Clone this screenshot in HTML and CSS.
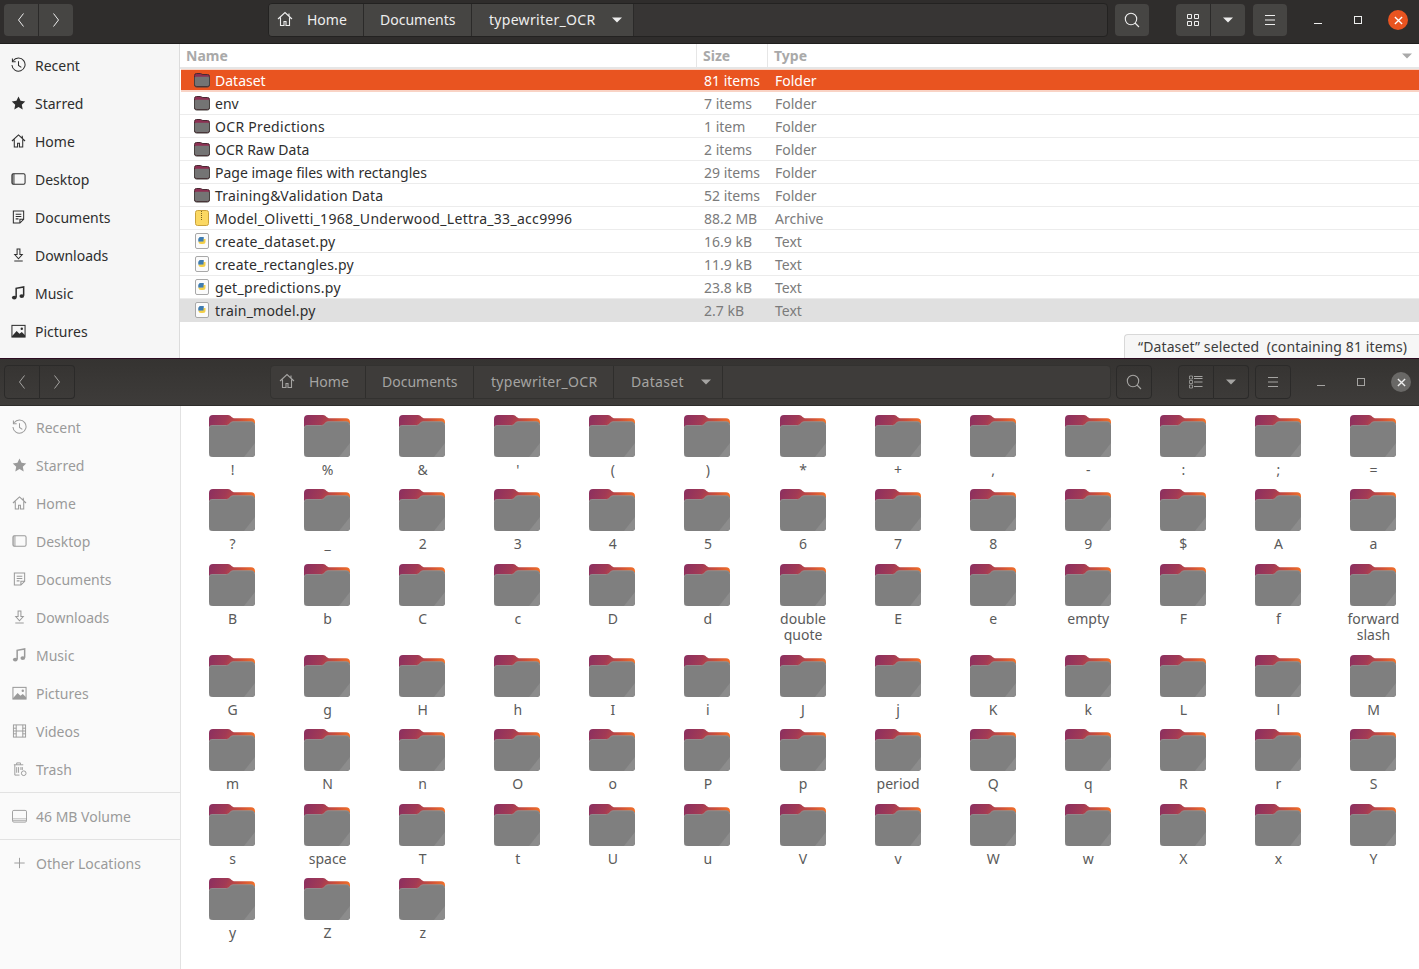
FILE: index.html
```html
<!DOCTYPE html>
<html lang="en">
<head>
<meta charset="utf-8">
<title>Files</title>
<link rel="stylesheet" href="styles.css">
</head>
<body>
<svg class="defs" aria-hidden="true">
  <defs>
    <linearGradient id="tabgrad" x1="0" y1="0" x2="1" y2="0.2">
      <stop offset="0" stop-color="#8a2f60"/><stop offset="0.4" stop-color="#a23a55"/><stop offset="0.72" stop-color="#cf5038"/><stop offset="1" stop-color="#f0702a"/>
    </linearGradient>
    <symbol id="folder" viewBox="0 0 46 42">
      <path d="M0 4a4 4 0 0 1 4-4h15c3 0 3.500 3.300 7 3.300h16a4 4 0 0 1 4 4V20H0z" fill="url(#tabgrad)"/>
      <path d="M0 13c0-1.500 1-2.500 2.500-2.500h15c3 0 3.500-3.800 6.500-3.800h18.500c2 0 3.500 1.500 3.500 3.500v27.800a4 4 0 0 1-4 4H4a4 4 0 0 1-4-4z" fill="#7f7f7f"/>
      <path d="M.3 13c0-1.500 1-2.500 2.500-2.500h14.700c3 0 3.500-3.800 6.500-3.800h18c2 0 3.500 1.500 3.500 3.500" fill="none" stroke="#949494" stroke-width=".8"/>
      <path d="M46 28v10a4 4 0 0 1-4 4h-7z" fill="#8c8c8c"/>
      <path d="M0 39a4 4 0 0 0 4 3h38a4 4 0 0 0 4-3v1a3 3 0 0 1-3 2H3a3 3 0 0 1-3-2z" fill="#6e6e6e"/>
    </symbol>
    <symbol id="sfolder" viewBox="0 0 16 15">
      <path d="M.5 3a2 2 0 0 1 2-2h4c1 0 1 1 2.500 1h4.500a2 2 0 0 1 2 2v8a2 2 0 0 1-2 2h-11a2 2 0 0 1-2-2z" fill="#8c2f52" stroke="#4a2a33"/>
      <path d="M1 5.500c0-.8.400-1.200 1.200-1.200h11.600c.8 0 1.200.4 1.200 1.200V12a1.500 1.500 0 0 1-1.500 1.500h-11A1.500 1.500 0 0 1 1 12z" fill="#747474"/>
      <path d="M2.500 14.500h11a2 2 0 0 0 2-2V4.500M.5 4.500v8a2 2 0 0 0 2 2" fill="none" stroke="#46413f"/>
    </symbol>
    <symbol id="pyfile" viewBox="0 0 14 16">
      <rect x=".5" y=".5" width="13" height="15" rx="1.500" fill="#fbfbfb" stroke="#a8a8a8"/>
      <path d="M3.500 8.500V6.500A2.500 2.500 0 0 1 6 4h2.500v2H6.800v2.500z" fill="#3f7cb0"/>
      <path d="M3.500 8.500h3.300V6h3.700v2.500a2.500 2.500 0 0 1-2.500 2.500H6a2.500 2.500 0 0 1-2.500-2.500z" fill="#f3cf4a"/>
      <path d="M3.500 8.500V6.500A2.500 2.500 0 0 1 6 4h2.500v4.500z" fill="#3f7cb0"/>
    </symbol>
    <symbol id="zipfile" viewBox="0 0 14 16">
      <rect x=".5" y=".5" width="13" height="15" rx="2" fill="#fbd862" stroke="#c9a23c"/>
      <path d="M6 1.500h2M6 3.500h2M6 5.500h2M6 7.500h2M6 9.500h2" stroke="#7a6420" stroke-width="1" stroke-dasharray="1 1"/>
    </symbol>
    <symbol id="i-home" viewBox="0 0 16 16"><path d="M1 8 8 1.500 15 8M3.500 6.500V14.500h3.500v-4h2v4h3.500V6.500M12 2.500v2.500" fill="none" stroke="currentColor" stroke-width="1.100"/></symbol>
    <symbol id="i-recent" viewBox="0 0 16 16"><path d="M2.300 3.500A7 7 0 1 1 1 8M1.500 1v3.500H5M8 4v4.500l3 2" fill="none" stroke="currentColor" stroke-width="1.100"/></symbol>
    <symbol id="i-star" viewBox="0 0 16 16"><path d="m8 1 2.200 4.700 5 .6-3.700 3.500 1 5L8 12.300 3.500 14.800l1-5L.8 6.300l5-.6z" fill="currentColor"/></symbol>
    <symbol id="i-desktop" viewBox="0 0 16 16"><rect x="1" y="2.500" width="14" height="11" rx="1.500" fill="none" stroke="currentColor" stroke-width="1.100"/><rect x="1" y="2.500" width="3" height="11" fill="currentColor" opacity=".55"/></symbol>
    <symbol id="i-docs" viewBox="0 0 16 16"><path d="M2.500 1.500h11v9l-4 4h-7zM13.500 10.500h-4v4M5 5h6M5 7.500h6M5 10h3" fill="none" stroke="currentColor" stroke-width="1.100"/></symbol>
    <symbol id="i-down" viewBox="0 0 16 16"><path d="M6.500 1.500h3v6h2.500L8 12 4 7.500h2.500zM3.500 14.500h9" fill="none" stroke="currentColor" stroke-width="1.100"/></symbol>
    <symbol id="i-music" viewBox="0 0 16 16"><path d="M5.500 12.500V3l8-1.500V11" fill="none" stroke="currentColor" stroke-width="1.600"/><ellipse cx="3.500" cy="12.800" rx="2.500" ry="2" fill="currentColor"/><ellipse cx="11.500" cy="11.300" rx="2.500" ry="2" fill="currentColor"/></symbol>
    <symbol id="i-pics" viewBox="0 0 16 16"><rect x="1" y="2" width="14" height="12.500" fill="none" stroke="currentColor" stroke-width="1.100"/><path d="M1 13.500 6 8l3 3 2.500-2 3.500 3.500v2H1z" fill="currentColor"/><circle cx="11.500" cy="5.500" r="1.300" fill="currentColor"/></symbol>
    <symbol id="i-video" viewBox="0 0 16 16"><rect x="1.500" y="1.500" width="13" height="13" fill="none" stroke="currentColor"/><path d="M4.500 1.500v13M11.500 1.500v13M4.500 8h7M1.500 5h3M1.500 8h3M1.500 11h3M11.500 5h3M11.500 8h3M11.500 11h3" stroke="currentColor"/></symbol>
    <symbol id="i-trash" viewBox="0 0 16 16"><path d="M2 3.500h10M5 3.500V1.500h4v2M3 3.500v11h5M5 6v6M7 6v6M9.500 6v3M11 6v3" fill="none" stroke="currentColor"/><circle cx="12.500" cy="12.500" r="2.500" fill="none" stroke="currentColor"/></symbol>
    <symbol id="i-drive" viewBox="0 0 16 16"><rect x=".5" y="2" width="15" height="12.500" rx="1.500" fill="none" stroke="currentColor"/><path d="M.5 11h15M.5 12.800h15" stroke="currentColor" stroke-width=".7"/></symbol>
    <symbol id="i-plus" viewBox="0 0 16 16"><path d="M8 2.500v11M2.500 8h11" stroke="currentColor"/></symbol>
    <symbol id="i-search" viewBox="0 0 16 16"><circle cx="7" cy="7" r="5.700" fill="none" stroke="currentColor" stroke-width="1.100"/><path d="m11 11 4 4" stroke="currentColor" stroke-width="1.100"/></symbol>
    <symbol id="i-grid" viewBox="0 0 14 14"><path d="M1.500 1.500h4v4h-4zM8.500 1.500h4v4h-4zM1.500 8.500h4v4h-4zM8.500 8.500h4v4h-4z" fill="none" stroke="currentColor"/></symbol>
    <symbol id="i-list" viewBox="0 0 14 14"><path d="M.5 1h3v3h-3zM.5 5.500h3v3h-3zM.5 10h3v3h-3z" fill="none" stroke="currentColor" stroke-width=".8"/><path d="M5 1.500h8.500M5 3.500h8.500M5 7h8.500M5 11.500h8.500" stroke="currentColor"/></symbol>
    <symbol id="i-menu" viewBox="0 0 12 12"><path d="M1 1.500h10M1 6h10M1 10.500h10" stroke="currentColor"/></symbol>
    <symbol id="i-left" viewBox="0 0 8 16"><path d="M6.500 1.500 1.500 8l5 6.500" fill="none" stroke="currentColor"/></symbol>
    <symbol id="i-right" viewBox="0 0 8 16"><path d="M1.500 1.500 6.500 8l-5 6.500" fill="none" stroke="currentColor"/></symbol>
    <symbol id="i-caret" viewBox="0 0 10 6"><path d="M0 .5h10L5 5.500z" fill="currentColor"/></symbol>
    <symbol id="i-x" viewBox="0 0 10 10"><path d="m1 1 8 8M9 1 1 9" stroke="currentColor" stroke-width="1.500"/></symbol>
  </defs>
</svg>

<div class="win win-top">
  <header class="bar">
    <div class="grp nav">
      <button class="btn b-nav"><svg class="ic-nav"><use href="#i-left"/></svg></button>
      <button class="btn b-nav"><svg class="ic-nav"><use href="#i-right"/></svg></button>
    </div>
    <div class="path">
      <div class="crumb c-home"><svg class="ic-home"><use href="#i-home"/></svg><span>Home</span></div>
      <div class="crumb c-doc"><span>Documents</span></div>
      <div class="crumb c-ocr"><span class="wide">typewriter_OCR</span><svg class="ic-caret"><use href="#i-caret"/></svg></div>
    </div>
    <button class="btn b-search"><svg class="ic-search"><use href="#i-search"/></svg></button>
    <div class="grp view">
      <button class="btn b-view"><svg class="ic-view"><use href="#i-grid"/></svg></button>
      <button class="btn b-view"><svg class="ic-caret"><use href="#i-caret"/></svg></button>
    </div>
    <button class="btn b-menu"><svg class="ic-menu"><use href="#i-menu"/></svg></button>
    <div class="wc">
      <span class="wc-min"></span>
      <span class="wc-max"></span>
      <span class="wc-close"><svg class="ic-x"><use href="#i-x"/></svg></span>
    </div>
  </header>
  <div class="body">
    <nav class="side">
      <a class="si"><svg class="si-ic"><use href="#i-recent"/></svg>Recent</a>
      <a class="si"><svg class="si-ic"><use href="#i-star"/></svg>Starred</a>
      <a class="si"><svg class="si-ic"><use href="#i-home"/></svg>Home</a>
      <a class="si"><svg class="si-ic"><use href="#i-desktop"/></svg>Desktop</a>
      <a class="si"><svg class="si-ic"><use href="#i-docs"/></svg>Documents</a>
      <a class="si"><svg class="si-ic"><use href="#i-down"/></svg>Downloads</a>
      <a class="si"><svg class="si-ic"><use href="#i-music"/></svg>Music</a>
      <a class="si"><svg class="si-ic"><use href="#i-pics"/></svg>Pictures</a>
    </nav>
    <main class="list">
      <div class="lh">
        <div class="col-name">Name</div><div class="col-size">Size</div><div class="col-type">Type<svg class="ic-sort"><use href="#i-caret"/></svg></div>
      </div>
      <div class="row sel"><div class="c1"><svg class="ric"><use href="#sfolder"/></svg>Dataset</div><div class="c2">81 items</div><div class="c3">Folder</div></div>
      <div class="row"><div class="c1"><svg class="ric"><use href="#sfolder"/></svg>env</div><div class="c2">7 items</div><div class="c3">Folder</div></div>
      <div class="row"><div class="c1"><svg class="ric"><use href="#sfolder"/></svg><span class="wide">OCR Predictions</span></div><div class="c2">1 item</div><div class="c3">Folder</div></div>
      <div class="row"><div class="c1"><svg class="ric"><use href="#sfolder"/></svg>OCR Raw Data</div><div class="c2">2 items</div><div class="c3">Folder</div></div>
      <div class="row"><div class="c1"><svg class="ric"><use href="#sfolder"/></svg>Page image files with rectangles</div><div class="c2">29 items</div><div class="c3">Folder</div></div>
      <div class="row"><div class="c1"><svg class="ric"><use href="#sfolder"/></svg><span class="mid">Training&amp;Validation Data</span></div><div class="c2">52 items</div><div class="c3">Folder</div></div>
      <div class="row"><div class="c1"><svg class="ric"><use href="#zipfile"/></svg><span class="wide">Model_Olivetti_1968_Underwood_Lettra_33_acc9996</span></div><div class="c2">88.2 MB</div><div class="c3">Archive</div></div>
      <div class="row"><div class="c1"><svg class="ric"><use href="#pyfile"/></svg><span class="wide">create_dataset.py</span></div><div class="c2">16.9 kB</div><div class="c3">Text</div></div>
      <div class="row"><div class="c1"><svg class="ric"><use href="#pyfile"/></svg><span class="mid">create_rectangles.py</span></div><div class="c2">11.9 kB</div><div class="c3">Text</div></div>
      <div class="row"><div class="c1"><svg class="ric"><use href="#pyfile"/></svg><span class="wide">get_predictions.py</span></div><div class="c2">23.8 kB</div><div class="c3">Text</div></div>
      <div class="row hov"><div class="c1"><svg class="ric"><use href="#pyfile"/></svg><span class="mid">train_model.py</span></div><div class="c2">2.7 kB</div><div class="c3">Text</div></div>
      <div class="status">“Dataset” selected  (containing 81 items)</div>
    </main>
  </div>
</div>

<div class="win win-bot">
  <header class="bar">
    <div class="grp nav">
      <button class="btn b-nav"><svg class="ic-nav"><use href="#i-left"/></svg></button>
      <button class="btn b-nav"><svg class="ic-nav"><use href="#i-right"/></svg></button>
    </div>
    <div class="path">
      <div class="crumb c-home"><svg class="ic-home"><use href="#i-home"/></svg><span>Home</span></div>
      <div class="crumb c-doc"><span>Documents</span></div>
      <div class="crumb c-ocr2"><span class="wide">typewriter_OCR</span></div>
      <div class="crumb c-data"><span class="wide">Dataset</span><svg class="ic-caret"><use href="#i-caret"/></svg></div>
    </div>
    <button class="btn b-search"><svg class="ic-search"><use href="#i-search"/></svg></button>
    <div class="grp view">
      <button class="btn b-view"><svg class="ic-view"><use href="#i-list"/></svg></button>
      <button class="btn b-view"><svg class="ic-caret"><use href="#i-caret"/></svg></button>
    </div>
    <button class="btn b-menu"><svg class="ic-menu"><use href="#i-menu"/></svg></button>
    <div class="wc">
      <span class="wc-min"></span>
      <span class="wc-max"></span>
      <span class="wc-close"><svg class="ic-x"><use href="#i-x"/></svg></span>
    </div>
  </header>
  <div class="body">
    <nav class="side">
      <a class="si"><svg class="si-ic"><use href="#i-recent"/></svg>Recent</a>
      <a class="si"><svg class="si-ic"><use href="#i-star"/></svg>Starred</a>
      <a class="si"><svg class="si-ic"><use href="#i-home"/></svg>Home</a>
      <a class="si"><svg class="si-ic"><use href="#i-desktop"/></svg>Desktop</a>
      <a class="si"><svg class="si-ic"><use href="#i-docs"/></svg>Documents</a>
      <a class="si"><svg class="si-ic"><use href="#i-down"/></svg>Downloads</a>
      <a class="si"><svg class="si-ic"><use href="#i-music"/></svg>Music</a>
      <a class="si"><svg class="si-ic"><use href="#i-pics"/></svg>Pictures</a>
      <a class="si"><svg class="si-ic"><use href="#i-video"/></svg>Videos</a>
      <a class="si"><svg class="si-ic"><use href="#i-trash"/></svg>Trash</a>
      <div class="sep"></div>
      <a class="si"><svg class="si-ic"><use href="#i-drive"/></svg>46 MB Volume</a>
      <div class="sep"></div>
      <a class="si"><svg class="si-ic"><use href="#i-plus"/></svg>Other Locations</a>
    </nav>
    <main class="icons">
      <div class="cell"><svg class="fo"><use href="#folder"/></svg><span>!</span></div>
      <div class="cell"><svg class="fo"><use href="#folder"/></svg><span>%</span></div>
      <div class="cell"><svg class="fo"><use href="#folder"/></svg><span>&amp;</span></div>
      <div class="cell"><svg class="fo"><use href="#folder"/></svg><span>'</span></div>
      <div class="cell"><svg class="fo"><use href="#folder"/></svg><span>(</span></div>
      <div class="cell"><svg class="fo"><use href="#folder"/></svg><span>)</span></div>
      <div class="cell"><svg class="fo"><use href="#folder"/></svg><span>*</span></div>
      <div class="cell"><svg class="fo"><use href="#folder"/></svg><span>+</span></div>
      <div class="cell"><svg class="fo"><use href="#folder"/></svg><span>,</span></div>
      <div class="cell"><svg class="fo"><use href="#folder"/></svg><span>-</span></div>
      <div class="cell"><svg class="fo"><use href="#folder"/></svg><span>:</span></div>
      <div class="cell"><svg class="fo"><use href="#folder"/></svg><span>;</span></div>
      <div class="cell"><svg class="fo"><use href="#folder"/></svg><span>=</span></div>
      <div class="cell"><svg class="fo"><use href="#folder"/></svg><span>?</span></div>
      <div class="cell"><svg class="fo"><use href="#folder"/></svg><span>_</span></div>
      <div class="cell"><svg class="fo"><use href="#folder"/></svg><span>2</span></div>
      <div class="cell"><svg class="fo"><use href="#folder"/></svg><span>3</span></div>
      <div class="cell"><svg class="fo"><use href="#folder"/></svg><span>4</span></div>
      <div class="cell"><svg class="fo"><use href="#folder"/></svg><span>5</span></div>
      <div class="cell"><svg class="fo"><use href="#folder"/></svg><span>6</span></div>
      <div class="cell"><svg class="fo"><use href="#folder"/></svg><span>7</span></div>
      <div class="cell"><svg class="fo"><use href="#folder"/></svg><span>8</span></div>
      <div class="cell"><svg class="fo"><use href="#folder"/></svg><span>9</span></div>
      <div class="cell"><svg class="fo"><use href="#folder"/></svg><span>$</span></div>
      <div class="cell"><svg class="fo"><use href="#folder"/></svg><span>A</span></div>
      <div class="cell"><svg class="fo"><use href="#folder"/></svg><span>a</span></div>
      <div class="cell"><svg class="fo"><use href="#folder"/></svg><span>B</span></div>
      <div class="cell"><svg class="fo"><use href="#folder"/></svg><span>b</span></div>
      <div class="cell"><svg class="fo"><use href="#folder"/></svg><span>C</span></div>
      <div class="cell"><svg class="fo"><use href="#folder"/></svg><span>c</span></div>
      <div class="cell"><svg class="fo"><use href="#folder"/></svg><span>D</span></div>
      <div class="cell"><svg class="fo"><use href="#folder"/></svg><span>d</span></div>
      <div class="cell"><svg class="fo"><use href="#folder"/></svg><span>double quote</span></div>
      <div class="cell"><svg class="fo"><use href="#folder"/></svg><span>E</span></div>
      <div class="cell"><svg class="fo"><use href="#folder"/></svg><span>e</span></div>
      <div class="cell"><svg class="fo"><use href="#folder"/></svg><span>empty</span></div>
      <div class="cell"><svg class="fo"><use href="#folder"/></svg><span>F</span></div>
      <div class="cell"><svg class="fo"><use href="#folder"/></svg><span>f</span></div>
      <div class="cell"><svg class="fo"><use href="#folder"/></svg><span>forward slash</span></div>
      <div class="cell"><svg class="fo"><use href="#folder"/></svg><span>G</span></div>
      <div class="cell"><svg class="fo"><use href="#folder"/></svg><span>g</span></div>
      <div class="cell"><svg class="fo"><use href="#folder"/></svg><span>H</span></div>
      <div class="cell"><svg class="fo"><use href="#folder"/></svg><span>h</span></div>
      <div class="cell"><svg class="fo"><use href="#folder"/></svg><span>I</span></div>
      <div class="cell"><svg class="fo"><use href="#folder"/></svg><span>i</span></div>
      <div class="cell"><svg class="fo"><use href="#folder"/></svg><span>J</span></div>
      <div class="cell"><svg class="fo"><use href="#folder"/></svg><span>j</span></div>
      <div class="cell"><svg class="fo"><use href="#folder"/></svg><span>K</span></div>
      <div class="cell"><svg class="fo"><use href="#folder"/></svg><span>k</span></div>
      <div class="cell"><svg class="fo"><use href="#folder"/></svg><span>L</span></div>
      <div class="cell"><svg class="fo"><use href="#folder"/></svg><span>l</span></div>
      <div class="cell"><svg class="fo"><use href="#folder"/></svg><span>M</span></div>
      <div class="cell"><svg class="fo"><use href="#folder"/></svg><span>m</span></div>
      <div class="cell"><svg class="fo"><use href="#folder"/></svg><span>N</span></div>
      <div class="cell"><svg class="fo"><use href="#folder"/></svg><span>n</span></div>
      <div class="cell"><svg class="fo"><use href="#folder"/></svg><span>O</span></div>
      <div class="cell"><svg class="fo"><use href="#folder"/></svg><span>o</span></div>
      <div class="cell"><svg class="fo"><use href="#folder"/></svg><span>P</span></div>
      <div class="cell"><svg class="fo"><use href="#folder"/></svg><span>p</span></div>
      <div class="cell"><svg class="fo"><use href="#folder"/></svg><span>period</span></div>
      <div class="cell"><svg class="fo"><use href="#folder"/></svg><span>Q</span></div>
      <div class="cell"><svg class="fo"><use href="#folder"/></svg><span>q</span></div>
      <div class="cell"><svg class="fo"><use href="#folder"/></svg><span>R</span></div>
      <div class="cell"><svg class="fo"><use href="#folder"/></svg><span>r</span></div>
      <div class="cell"><svg class="fo"><use href="#folder"/></svg><span>S</span></div>
      <div class="cell"><svg class="fo"><use href="#folder"/></svg><span>s</span></div>
      <div class="cell"><svg class="fo"><use href="#folder"/></svg><span>space</span></div>
      <div class="cell"><svg class="fo"><use href="#folder"/></svg><span>T</span></div>
      <div class="cell"><svg class="fo"><use href="#folder"/></svg><span>t</span></div>
      <div class="cell"><svg class="fo"><use href="#folder"/></svg><span>U</span></div>
      <div class="cell"><svg class="fo"><use href="#folder"/></svg><span>u</span></div>
      <div class="cell"><svg class="fo"><use href="#folder"/></svg><span>V</span></div>
      <div class="cell"><svg class="fo"><use href="#folder"/></svg><span>v</span></div>
      <div class="cell"><svg class="fo"><use href="#folder"/></svg><span>W</span></div>
      <div class="cell"><svg class="fo"><use href="#folder"/></svg><span>w</span></div>
      <div class="cell"><svg class="fo"><use href="#folder"/></svg><span>X</span></div>
      <div class="cell"><svg class="fo"><use href="#folder"/></svg><span>x</span></div>
      <div class="cell"><svg class="fo"><use href="#folder"/></svg><span>Y</span></div>
      <div class="cell"><svg class="fo"><use href="#folder"/></svg><span>y</span></div>
      <div class="cell"><svg class="fo"><use href="#folder"/></svg><span>Z</span></div>
      <div class="cell"><svg class="fo"><use href="#folder"/></svg><span>z</span></div>
    </main>
  </div>
</div>
</body>
</html>
```
FILE: styles.css
```css
* { box-sizing: border-box; }
html, body { margin: 0; height: 100%; overflow: hidden; }
body {
  font-family: "Noto Sans", "Open Sans", sans-serif;
  font-size: 14px;
  color: #3d3d3d;
  background: #2c001e;
}
.defs { position: absolute; width: 0; height: 0; }
svg { display: block; flex: none; }
.wide { letter-spacing: .3px; }
.mid { letter-spacing: .2px; }

.win { display: flex; flex-direction: column; overflow: hidden; }
.win-top { height: 358px; }
.win-bot { height: 611px; border-top: 1px solid #2c0b22; }

/* header bar */
.bar { display: flex; align-items: center; flex: none; color: #eee; }
.win-top .bar { height: 44px; background: #2f2d2c; border-bottom: 1px solid #1f1e1d; padding: 0 0 3px 4px; }
.win-bot .bar { height: 47px; background: linear-gradient(#353331, #3e3c3a); border-bottom: 1px solid #2e2d2b; padding: 0 0 0 4px; color: #a5a4a2; }

.btn { display: flex; align-items: center; justify-content: center; border: 0; padding: 0; color: inherit; background: #464543; border-radius: 4px; height: 32px; }
.win-bot .btn { height: 34px; background: transparent; border: 1px solid #2b2a29; }

.grp { display: flex; }
.grp .btn { border-radius: 0; }
.grp .btn:first-child { border-radius: 4px 0 0 4px; border-right: 1px solid #2b2a29; }
.grp .btn:last-child { border-radius: 0 4px 4px 0; }
.win-bot .grp .btn:last-child { border-left: 0; }

.b-nav { width: 34.500px; }
.win-bot .b-nav { width: 35.500px; }
.ic-nav { width: 8px; height: 16px; }

.path { display: flex; flex: 1; height: 34px; margin-left: 195px; background: #373534; border: 1px solid #232221; border-radius: 4px; }
.win-bot .path { background: #3e3c3a; border-color: #333230; }
.crumb { display: flex; align-items: center; background: #464543; border-right: 1px solid #2b2a29; padding-left: 17px; padding-bottom: 2px; }
.win-bot .crumb { background: transparent; border-right-color: #2f2e2c; }
.crumb:first-child { border-radius: 3px 0 0 3px; padding-left: 8px; }
.c-home { width: 95px; }
.c-doc { width: 108px; padding-left: 16px; }
.c-ocr { width: 162px; }
.c-ocr2 { width: 140px; }
.c-data { width: 109px; }
.ic-home { width: 16px; height: 16px; margin-right: 14px; }
.crumb .ic-caret { margin-left: 17px; margin-top: 2px; }
.ic-caret { width: 10px; height: 6px; }

.b-search { width: 34px; margin-left: 7px; }
.win-bot .b-search { width: 36px; margin-left: 5px; }
.ic-search { width: 16px; height: 16px; }

.view { margin-left: 27px; }
.win-bot .view { margin-left: 26px; }
.b-view { width: 34.500px; }
.win-bot .b-view { width: 35.500px; }
.ic-view { width: 14px; height: 14px; }

.b-menu { width: 34px; margin-left: 8px; }
.win-bot .b-menu { width: 36px; margin-left: 6px; }
.ic-menu { width: 12px; height: 12px; }

.wc { display: flex; align-items: center; width: 132px; flex: none; height: 100%; }
.win-bot .wc { width: 128px; }
.wc-min { width: 8px; height: 1.500px; background: currentColor; margin: 7px 0 0 27px; }
.win-bot .wc-min { margin-left: 26px; }
.wc-max { width: 8px; height: 8px; border: 1px solid currentColor; margin-left: 32px; }
.wc-close { display: flex; align-items: center; justify-content: center; width: 20px; height: 20px; border-radius: 50%; background: #e95420; color: #fff; margin-left: 26px; }
.win-bot .wc-close { background: #696866; color: #eee; }
.ic-x { width: 9px; height: 9px; }

/* body */
.body { display: flex; flex: 1; min-height: 0; }
.side { flex: none; background: #f6f6f6; border-right: 1px solid #dcdcdc; padding-top: 2px; color: #2e2e2e; }
.win-top .side { width: 180px; }
.win-bot .side { width: 181px; background: #fafafa; color: #9a9a9a; border-right-color: #e2e2e2; }
.si { display: flex; align-items: center; height: 38px; padding-left: 11px; gap: 9px; }
.win-bot .si { padding-left: 12px; }
.si-ic { width: 15px; height: 16px; }
.sep { height: 1px; background: #e2e2e2; margin: 4px 0; }

/* list view */
.list { flex: 1; position: relative; background: #fff; min-width: 0; }
.lh { display: flex; height: 25px; align-items: center; font-weight: 700; color: #a9a9a9; border-bottom: 2px solid #e6e6e6; }
.col-name { width: 517px; padding-left: 6px; height: 100%; border-right: 1px solid #e6e6e6; line-height: 24px; }
.col-size { width: 71px; padding-left: 6px; height: 100%; border-right: 1px solid #e6e6e6; line-height: 24px; }
.col-type { flex: 1; display: flex; align-items: center; justify-content: space-between; padding: 0 7px 0 6px; height: 100%; }
.ic-sort { width: 10px; height: 6px; }
.row { display: flex; align-items: center; height: 23px; border-bottom: 1px solid #ececec; color: #2e2e2e; }
.row .c2, .row .c3 { color: #7b7b7b; }
.c1 { display: flex; align-items: center; width: 517px; padding-left: 14px; gap: 5px; white-space: nowrap; }
.c2 { width: 71px; padding-left: 7px; white-space: nowrap; }
.c3 { flex: 1; padding-left: 7px; }
.ric { width: 16px; height: 16px; }
.sel { background: #e95420; color: #fff; margin-left: 1px; border-top: 1px solid #f9d3c5; border-bottom: 2px solid #f9d3c5; }
.sel .c1 { width: 516px; padding-left: 13px; }
.row.sel .c2, .row.sel .c3 { color: #fff; }
.hov { background: #e0e0e0; border-bottom-color: #e0e0e0; }
.status { position: absolute; right: 0; bottom: 0; height: 24px; width: 295px; background: #f6f6f6; border: 1px solid #d8d8d8; border-width: 1px 0 0 1px; border-radius: 4px 0 0 0; padding-left: 13px; line-height: 24px; white-space: pre; color: #3d3d3d; letter-spacing: .12px; }

/* icon grid */
.icons { flex: 1; background: #fff; padding: 5.900px 0 0 4px; display: grid; grid-template-columns: repeat(13, 95.080px); grid-auto-rows: min-content; align-content: start; overflow: hidden; }
.cell { display: flex; flex-direction: column; align-items: center; min-height: 74.500px; color: #5a5a5a; text-align: center; line-height: 16.500px; padding-bottom: 8px; }
.fo { width: 46px; height: 42px; margin: 3px 1px 5px 0; }
.cell span { max-width: 74px; }
```
